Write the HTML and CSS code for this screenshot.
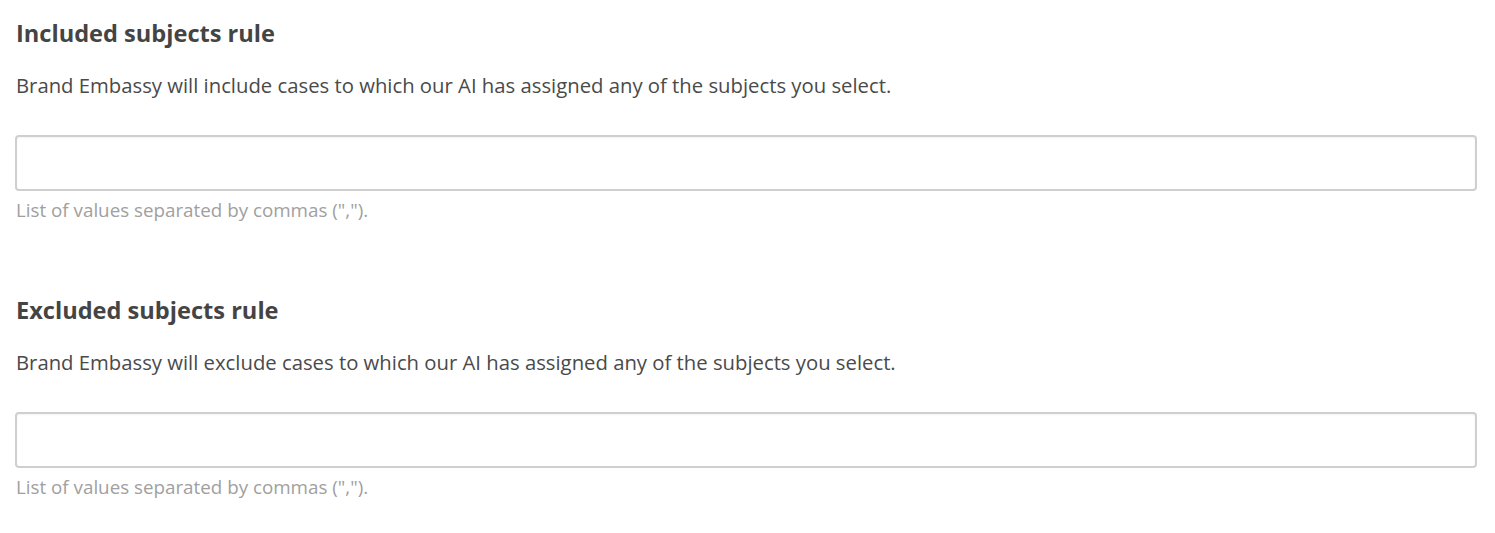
FILE: index.html
```html
<!DOCTYPE html>
<html>
<head>
<meta charset="utf-8">
<link rel="stylesheet" href="styles.css">
</head>
<body>
<div class="page">
  <section class="rule">
    <h2 class="rule-title">Included subjects rule</h2>
    <p class="rule-desc">Brand Embassy will include cases to which our AI has assigned any of the subjects you select.</p>
    <input class="rule-input" type="text">
    <p class="rule-hint">List of values separated by commas (",").</p>
  </section>
  <section class="rule">
    <h2 class="rule-title">Excluded subjects rule</h2>
    <p class="rule-desc">Brand Embassy will exclude cases to which our AI has assigned any of the subjects you select.</p>
    <input class="rule-input" type="text">
    <p class="rule-hint">List of values separated by commas (",").</p>
  </section>
</div>
</body>
</html>
```
FILE: styles.css
```css
html, body {
  margin: 0;
  padding: 0;
  background: #fff;
}
body {
  font-family: "Open Sans", "Liberation Sans", sans-serif;
  color: #444;
}
.page {
  padding: 17px 18px 0 15px;
  display: flex;
  flex-direction: column;
  gap: 72px;
}
.rule {
  display: flex;
  flex-direction: column;
}
.rule-title {
  margin: 0;
  font-size: 23.6px;
  line-height: 32px;
  font-weight: 700;
  color: #444;
  padding-left: 1px;
}
.rule-desc {
  margin: 22px 0 0 1px;
  font-size: 20.3px;
  line-height: 28px;
  color: #4a4a4a;
}
.rule-input {
  margin: 36px 0 0 0;
  box-sizing: border-box;
  height: 56px;
  width: 100%;
  border: 2px solid #cfcfcf;
  border-radius: 4px;
  background: #fff;
  box-shadow: inset 0 1px 2px rgba(0, 0, 0, 0.05);
  outline: none;
  font: inherit;
}
.rule-hint {
  margin: 7px 0 0 1px;
  font-size: 18.8px;
  line-height: 24px;
  color: #a0a0a0;
}
```
